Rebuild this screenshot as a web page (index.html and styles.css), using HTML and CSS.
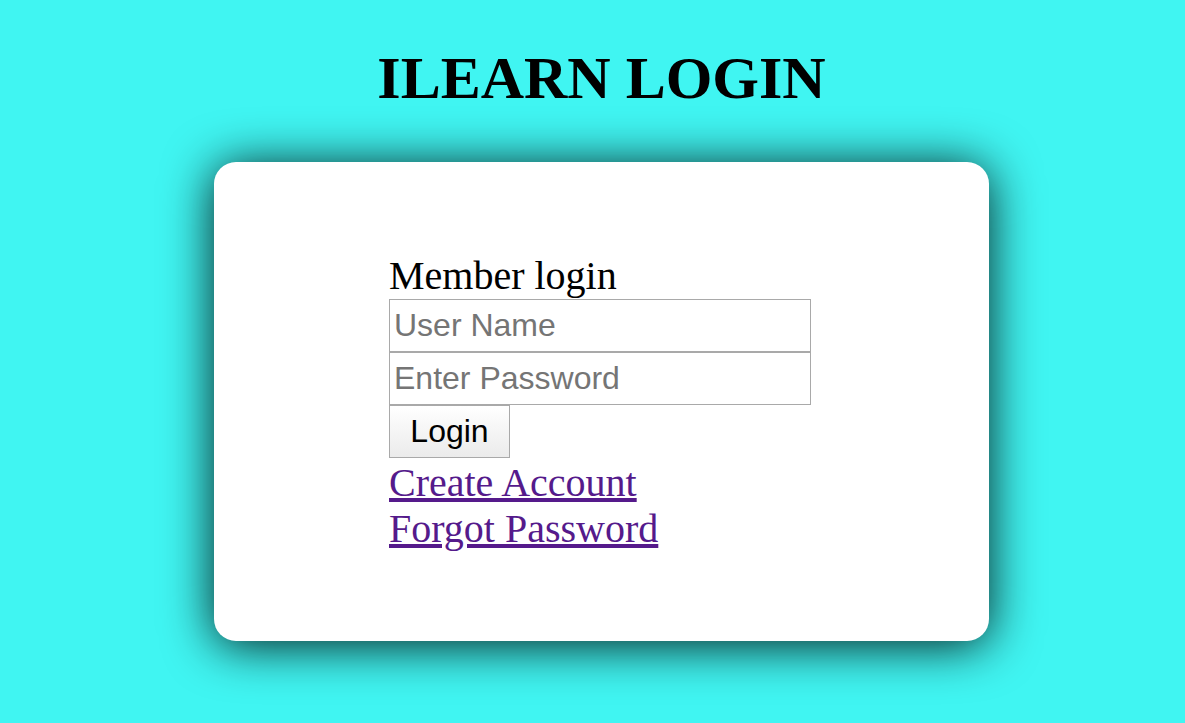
FILE: index.html
```html
<!DOCTYPE html>
<html lang="en">
<head>
<meta charset="utf-8">
<title>ILEARN LOGIN</title>
<link rel="stylesheet" href="styles.css">
</head>
<body>
<div class="page">
  <h1 class="title">ILEARN LOGIN</h1>
  <div class="card">
    <form class="form">
      <div class="label">Member login</div>
      <input class="field" type="text" placeholder="User Name">
      <input class="field" type="password" placeholder="Enter Password">
      <div><button class="btn" type="button">Login</button></div>
      <div class="links">
        <a class="link" href="#">Create Account</a>
        <a class="link" href="#">Forgot Password</a>
      </div>
    </form>
  </div>
</div>
</body>
</html>
```

FILE: styles.css
```css
html, body {
  margin: 0;
  padding: 0;
  background: #40f5f2;
}
.page {
  min-height: 723px;
  box-sizing: border-box;
  padding-left: 18px;
  padding-top: 44px;
  padding-bottom: 82px;
  display: flex;
  flex-direction: column;
  align-items: center;
  font-family: "Liberation Serif", "Times New Roman", serif;
}
.title {
  margin: 0;
  font-size: 60px;
  font-weight: bold;
  line-height: 69px;
  color: #000;
}
.card {
  margin-top: 49px;
  width: 775px;
  height: 479px;
  box-sizing: border-box;
  background: #fff;
  border-radius: 22px;
  box-shadow: 0 4px 50px rgba(0, 0, 0, 0.9);
  padding: 91px 0 0 175px;
}
.form {
  display: flex;
  flex-direction: column;
  align-items: flex-start;
  margin: 0;
}
.label {
  font-size: 40px;
  line-height: 46px;
  color: #000;
}
.field {
  box-sizing: border-box;
  width: 422px;
  height: 53px;
  margin: 0;
  padding: 0 4px;
  border: 1px solid #a9a9a9;
  border-radius: 0;
  font-family: "Liberation Sans", Arial, sans-serif;
  font-size: 32px;
  color: #000;
  background: #fff;
  outline: none;
}
.field::placeholder {
  color: #757575;
}
.btn {
  box-sizing: border-box;
  width: 121px;
  height: 53px;
  margin: 0;
  padding: 0;
  border: 1px solid #a9a9a9;
  border-radius: 0;
  background: linear-gradient(#ffffff, #ebebeb);
  font-family: "Liberation Sans", Arial, sans-serif;
  font-size: 32px;
  color: #000;
  display: block;
}
.links {
  display: flex;
  flex-direction: column;
  align-items: flex-start;
  padding-top: 2px;
}
.link {
  font-size: 40px;
  line-height: 46px;
  color: #551a8b;
  text-decoration: underline;
}
```
